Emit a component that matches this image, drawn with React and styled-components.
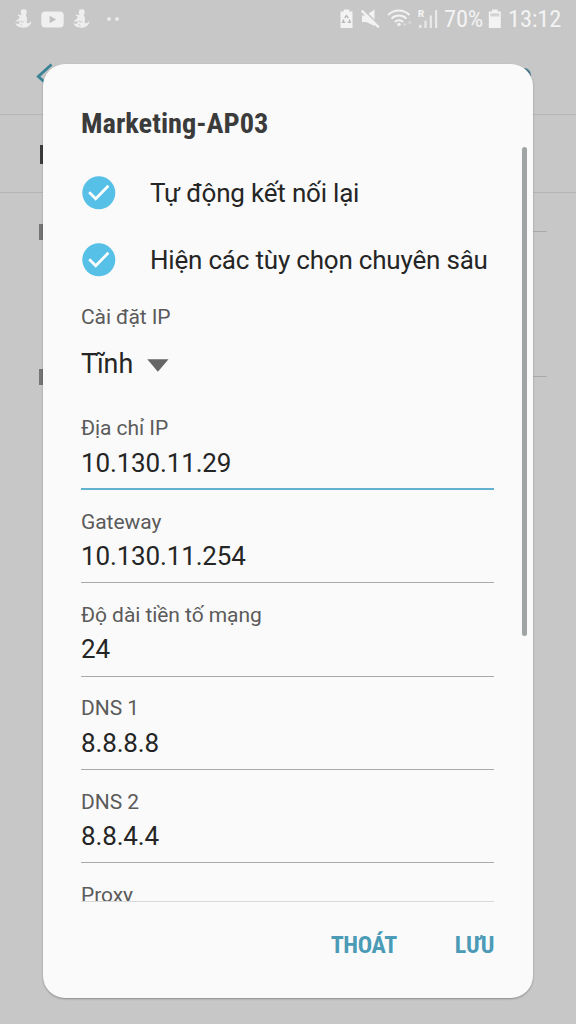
import React from "react";
import styled, { createGlobalStyle } from "styled-components";

const fields = [
  { label: "Địa chỉ IP", value: "10.130.11.29", active: true },
  { label: "Gateway", value: "10.130.11.254" },
  { label: "Độ dài tiền tố mạng", value: "24" },
  { label: "DNS 1", value: "8.8.8.8" },
  { label: "DNS 2", value: "8.8.4.4" },
];

function FigureIcon() {
  return (
    <svg width="18" height="20" viewBox="0 0 18 20" fill="#eeeeee">
      <rect x="6.8" y="0.2" width="5.8" height="6.2" rx="2.4" />
      <path d="M6.4 6h5.4l1.2 3.2-.4 5H5.6L4.6 10.6z" />
      <path d="M7 7.4 4 5.8M6 9.8 2.6 12.4" stroke="#eeeeee" strokeWidth="1.5" fill="none" />
      <path d="M1.4 13.6c1.1 1.6 2.6 1.8 4.4.4h6.8l2.4.3 2.4-2c0 3.6-3.2 6.4-7.6 6.4-4.6 0-8-1.5-8.4-5.1z" />
      <path d="M6 11.6c1.2 1.5 2.8 1.9 4.4.7M6.4 15.4l2 1.2" stroke="#cccccc" strokeWidth="1" fill="none" />
    </svg>
  );
}

function VideoIcon() {
  return (
    <svg width="23" height="17" viewBox="0 0 23 17">
      <rect x="0.3" y="0.5" width="22.4" height="16" rx="3.8" fill="#f0f0f0" />
      <path d="M8.6 4.8v7.4l6.6-3.7z" fill="#c0c0c0" />
    </svg>
  );
}

function RecycleBatteryIcon() {
  return (
    <svg width="14" height="20" viewBox="0 0 14 20">
      <path d="M3.7 .5h5.6v1.9h3.2V19H.5V2.4h3.2z" fill="#f3f3f3" />
      <path
        d="M4.7 9 6.5 6.6 8.3 9M9.3 10.5l1 2.8H7.7M5.3 13.3H2.7l1-2.8"
        fill="none"
        stroke="#b8b8b8"
        strokeWidth="1.4"
      />
    </svg>
  );
}

function MuteIcon() {
  return (
    <svg width="20" height="20" viewBox="0 0 20 20">
      <path d="M2 6.5h4.2L14.5 .5v16.5L6.2 13H2z" fill="#f3f3f3" />
      <path d="M3.4 .6 20 17" stroke="#c7c7c7" strokeWidth="1.6" />
      <path d="M1.7 1.6 18.8 18.4" stroke="#f3f3f3" strokeWidth="2.2" />
    </svg>
  );
}

function WifiIcon() {
  return (
    <svg width="26" height="20" viewBox="0 0 26 20" fill="none" stroke="#f3f3f3" strokeWidth="2">
      <path d="M2.2 6C8 0 17.5 0 23.5 6" />
      <path d="M5.5 9.6c4.2-4 10.7-4 14.9 0" />
      <path d="M9 13c2.2-2.2 5.8-2.2 8 0" />
      <circle cx="13" cy="15.4" r="1.7" fill="#f3f3f3" stroke="none" />
      <path d="M16.5 14.5h4.4l-2.2 3zM21.5 14.5H26l-2.2-3z" fill="#d8d8d8" stroke="none" />
    </svg>
  );
}

function SignalIcon() {
  return (
    <StSignal>
      <StRoaming>R</StRoaming>
      <svg width="20" height="20" viewBox="0 0 20 20" fill="#e9e9e9">
        <path d="M1 16h2.5v3H1zM6.4 11.5h2.2V19H6.4zM11.7 6.5h2.2V19h-2.2zM17 1h2.2v18H17z" />
      </svg>
    </StSignal>
  );
}

function BatteryIcon() {
  return (
    <svg width="14" height="20" viewBox="0 0 14 20">
      <path d="M4 .5h5.6v1.9h3.2V19H.8V2.4H4z" fill="#f3f3f3" />
      <path d="M2.3 4.3h9v3.2h-9z" fill="#d3d3d3" />
    </svg>
  );
}

function CheckIcon() {
  return (
    <svg width="34" height="34" viewBox="0 0 34 34">
      <circle cx="16.8" cy="16.8" r="16.5" fill="#56c0e6" />
      <path d="m7.2 16.3 6.5 6.5L26.4 9.8" fill="none" stroke="#fff" strokeWidth="2.7" />
    </svg>
  );
}

function App() {
  return (
    <>
      <GlobalStyle />
      <StScreen>
        <StStatusBar>
          <StNotifications>
            <FigureIcon />
            <VideoIcon />
            <FigureIcon />
            <StDots>
              <i />
              <i />
            </StDots>
          </StNotifications>
          <StSystem>
            <RecycleBatteryIcon />
            <MuteIcon />
            <WifiIcon />
            <SignalIcon />
            <StStatusText $width={38}>70%</StStatusText>
            <BatteryIcon />
            <StStatusText $width={54}>13:12</StStatusText>
          </StSystem>
        </StStatusBar>
        <StAppBar>
          <svg width="20" height="26" viewBox="0 0 20 26">
            <path d="M16.5 1.5 3.3 13.5l13 11.5" fill="none" stroke="#3c8296" strokeWidth="2.8" />
          </svg>
          <StKnob />
        </StAppBar>
        <StToggleRow>
          <StStem $height={19} $color="#3b3b3b" />
        </StToggleRow>
        <StSection>
          <StStem $height={16} $color="#757575" />
          <StRule />
        </StSection>
        <StSection>
          <StStem $height={16} $color="#757575" />
          <StRule />
        </StSection>

        <StDialog>
          <StTitle>Marketing-AP03</StTitle>
          <StBody>
            <StCheckRow>
              <CheckIcon />
              Tự động kết nối lại
            </StCheckRow>
            <StCheckRow>
              <CheckIcon />
              Hiện các tùy chọn chuyên sâu
            </StCheckRow>
            <StGroupLabel>Cài đặt IP</StGroupLabel>
            <StSelect>
              Tĩnh
              <StArrow width="22" height="13" viewBox="0 0 22 13">
                <path d="M.3 .3h21.2L10.9 12.7z" fill="#656565" />
              </StArrow>
            </StSelect>
            {fields.map(({ label, value, active }) => (
              <StField key={label} $active={active}>
                <StLabel>{label}</StLabel>
                <StValue>{value}</StValue>
              </StField>
            ))}
            <StField>
              <StLabel>Proxy</StLabel>
            </StField>
          </StBody>
          <StScrollbar />
          <StActions>
            <StButton>THOÁT</StButton>
            <StButton>LƯU</StButton>
          </StActions>
        </StDialog>
      </StScreen>
    </>
  );
}

export default App;

const GlobalStyle = createGlobalStyle`
  * {
    box-sizing: border-box;
  }
  body {
    margin: 0;
    font-family: Roboto, sans-serif;
  }
  svg {
    display: block;
    flex-shrink: 0;
  }
`;

const StScreen = styled.div`
  position: relative;
  width: 576px;
  height: 1024px;
  overflow: hidden;
  background: #c7c7c7;
`;

const StStatusBar = styled.div`
  display: flex;
  justify-content: space-between;
  height: 38px;
  padding: 0 14px;
`;

const StNotifications = styled.div`
  display: flex;
  align-items: center;
  gap: 8.5px;
`;

const StDots = styled.div`
  display: flex;
  gap: 4px;
  margin-left: 8px;

  i {
    width: 4px;
    height: 4px;
    border-radius: 50%;
    background: #e8e8e8;
  }
`;

const StSystem = styled.div`
  display: flex;
  align-items: center;
  gap: 6px;
`;

const StStatusText = styled.span`
  width: ${({ $width }) => $width}px;
  line-height: 28px;
  font-size: 24.5px;
  font-stretch: 75%;
  letter-spacing: -0.2px;
  color: #f3f3f3;
`;

const StSignal = styled.div`
  position: relative;
`;

const StRoaming = styled.span`
  position: absolute;
  left: 0;
  top: 0;
  font-size: 9.5px;
  line-height: 9px;
  font-weight: 900;
  color: #f3f3f3;
`;

const StAppBar = styled.div`
  display: flex;
  align-items: center;
  justify-content: space-between;
  height: 77px;
  padding: 0 45px 0 35px;
  border-bottom: 1px solid #b5b5b5;
`;

const StKnob = styled.span`
  width: 14px;
  height: 14px;
  margin-top: -3px;
  border-radius: 50%;
  background: #477a8c;
`;

const StToggleRow = styled.div`
  display: flex;
  align-items: center;
  height: 78px;
  padding: 2px 0 0 40px;
  border-bottom: 1px solid #b5b5b5;
`;

const StSection = styled.div`
  display: flex;
  align-items: flex-start;
  height: 145px;
  padding: 31px 29px 0 39px;
`;

const StStem = styled.span`
  width: 3.5px;
  height: ${({ $height }) => $height}px;
  background: ${({ $color }) => $color};
`;

const StRule = styled.span`
  flex: 1;
  height: 1px;
  margin-top: 7px;
  background: #a9a9a9;
`;

const StDialog = styled.div`
  position: absolute;
  left: 43px;
  top: 64px;
  display: flex;
  flex-direction: column;
  width: 489.6px;
  height: 934px;
  border-radius: 22px;
  background: #fafafa;
  box-shadow: 0 1px 2px rgba(0, 0, 0, 0.3);
`;

const StTitle = styled.h1`
  height: 83px;
  margin: 0;
  padding: 36px 38px 0;
  line-height: 47px;
  font-size: 28.4px;
  font-weight: 700;
  font-stretch: 75%;
  color: #3b3b3b;
`;

const StBody = styled.div`
  width: 413.4px;
  height: 755px;
  margin-left: 38px;
  padding-top: 12px;
  overflow: hidden;
  border-bottom: 1px solid #d8d8d8;
`;

const StCheckRow = styled.div`
  display: flex;
  align-items: center;
  gap: 34px;
  height: 67px;
  padding-left: 1px;
  font-size: 26px;
  letter-spacing: -0.2px;
  white-space: nowrap;
  color: #252525;
`;

const StGroupLabel = styled.div`
  height: 45px;
  line-height: 48px;
  font-size: 21px;
  letter-spacing: -0.1px;
  color: #5b5b5b;
`;

const StSelect = styled.div`
  display: flex;
  align-items: center;
  gap: 14px;
  height: 51px;
  margin-bottom: 7.7px;
  font-size: 26.8px;
  color: #252525;
`;

const StArrow = styled.svg`
  margin-top: 3px;
`;

const StField = styled.div`
  height: 93.3px;
  padding-top: 17.7px;
  border-bottom: ${({ $active }) => ($active ? "2px solid #62b2cf" : "1px solid #a9a9a9")};
`;

const StLabel = styled.div`
  line-height: 28px;
  font-size: 21px;
  letter-spacing: -0.06px;
  color: #5b5b5b;
`;

const StValue = styled.div`
  margin-top: -0.7px;
  line-height: 42px;
  font-size: 26px;
  letter-spacing: -0.15px;
  color: #252525;
`;

const StScrollbar = styled.span`
  position: absolute;
  top: 83px;
  right: 5.6px;
  width: 5px;
  height: 489px;
  border-radius: 3px;
  background: #a0a4a5;
`;

const StActions = styled.div`
  display: flex;
  align-items: center;
  justify-content: flex-end;
  gap: 58px;
  height: 86px;
  padding-right: 38.6px;
`;

const StButton = styled.button`
  padding: 0;
  border: 0;
  background: none;
  font-family: inherit;
  font-size: 24px;
  font-weight: 700;
  font-stretch: 75%;
  letter-spacing: -0.35px;
  color: #4b9bb7;
`;
